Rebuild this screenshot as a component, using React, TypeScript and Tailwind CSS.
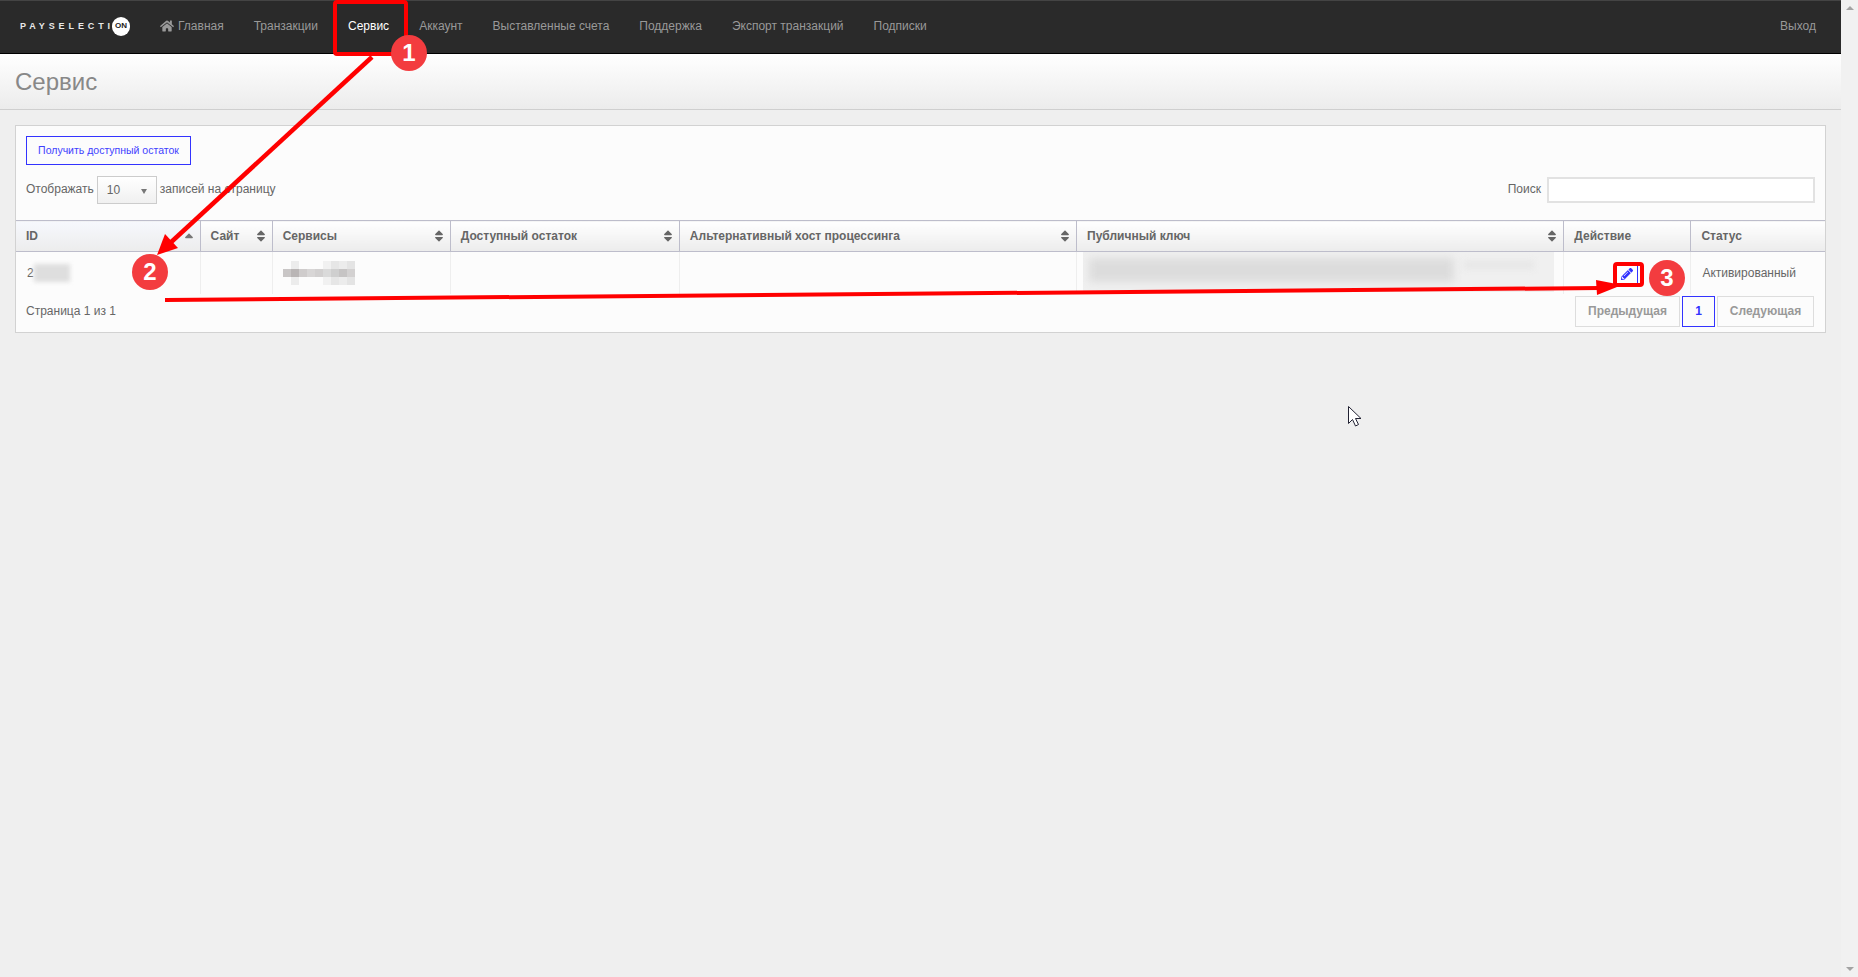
import React from 'react';
import { FaHome, FaPencilAlt, FaSort, FaSortUp } from 'react-icons/fa';

const navItems = ['Транзакции', 'Сервис', 'Аккаунт', 'Выставленные счета', 'Поддержка', 'Экспорт транзакций', 'Подписки'];

const columns = [
  { title: 'ID', width: 'w-[184px]', sort: 'up' },
  { title: 'Сайт', width: 'w-[72px]', sort: 'both' },
  { title: 'Сервисы', width: 'w-[178px]', sort: 'both' },
  { title: 'Доступный остаток', width: 'w-[229px]', sort: 'both' },
  { title: 'Альтернативный хост процессинга', width: 'w-[397px]', sort: 'both' },
  { title: 'Публичный ключ', width: 'w-[487px]', sort: 'both' },
  { title: 'Действие', width: 'w-[127px]', sort: '' },
  { title: 'Статус', width: 'w-[134px]', sort: '' },
];

const mosaicTop = ['w-[8px] bg-transparent', 'w-[8px] bg-[#ececec]', 'w-[24px] bg-transparent', 'w-[8px] bg-[#f1f1f1]', 'w-[8px] bg-[#e6e6e6]', 'w-[8px] bg-[#ececec]', 'w-[8px] bg-[#e4e4e4]'];
const mosaicMid = ['w-[8px] bg-[#c9c6c6]', 'w-[8px] bg-[#b9b5b5]', 'w-[8px] bg-[#cfcccc]', 'w-[8px] bg-[#d8d6d6]', 'w-[8px] bg-[#d2d0d0]', 'w-[8px] bg-[#dadada]', 'w-[8px] bg-[#cfcfcf]', 'w-[8px] bg-[#c6c4c4]', 'w-[8px] bg-[#d3d1d1]'];

const Logo = () => (
  <div className="flex items-center w-[125px]">
    <span className="w-[92px] whitespace-nowrap text-[9px] font-bold leading-none tracking-[3.9px] text-[#e8e8e8]">PAYSELECTI</span>
    <span className="flex h-[19px] w-[18px] items-center justify-center rounded-full bg-white text-[8px] font-bold leading-none text-[#222]">ON</span>
  </div>
);

const Navbar = () => (
  <nav className="flex h-[54px] shrink-0 items-center justify-between border-t border-t-[#444] border-b border-b-black bg-[#2a2a2a] pb-[2px] pl-5 pr-[25px] text-xs text-[#999]">
    <div className="flex items-center">
      <Logo />
      <a className="flex items-center gap-[4px] px-[15px]">
        <FaHome size={14} className="text-[#999]" />
        Главная
      </a>
      {navItems.map((item) => (
        <a key={item} className={item === 'Сервис' ? 'px-[15px] text-white' : 'px-[15px]'}>
          {item}
        </a>
      ))}
    </div>
    <a>Выход</a>
  </nav>
);

const ServiceTable = () => (
  <table className="w-full table-fixed border-collapse text-xs text-[#666]">
    <thead>
      <tr className="h-[31px]">
        {columns.map((col) => (
          <th
            key={col.title}
            className={`${col.width} border-y border-y-[#bdbdcb] border-r border-r-[#bdbdcb] last:border-r-0 bg-gradient-to-b ${col.title === 'ID' ? 'from-[#f6f8fd]' : 'from-white'} to-[#ececec] pl-[10px] pr-[4px] text-left font-bold`}
          >
            <div className="flex items-center justify-between">
              {col.title}
              {col.sort === 'both' && <FaSort size={14} className="text-[#666]" />}
              {col.sort === 'up' && <FaSortUp size={14} className="mt-[6px] text-[#777]" />}
            </div>
          </th>
        ))}
      </tr>
    </thead>
    <tbody>
      <tr className="h-[42px]">
        <td className="border-r border-r-[#eee] pl-[11px]">
          <div className="flex items-center">
            2
            <div className="h-[18px] w-[36px] bg-[#dedede] blur-[2px]" />
          </div>
        </td>
        <td className="border-r border-r-[#eee]" />
        <td className="border-r border-r-[#eee] pl-[10px]">
          <div className="flex w-[76px] flex-col">
            <div className="flex h-[8px]">
              {mosaicTop.map((c, i) => (
                <div key={i} className={c} />
              ))}
            </div>
            <div className="flex h-[8px]">
              {mosaicMid.map((c, i) => (
                <div key={i} className={c} />
              ))}
            </div>
            <div className="flex h-[8px]">
              {mosaicTop.map((c, i) => (
                <div key={i} className={c} />
              ))}
            </div>
          </div>
        </td>
        <td className="border-r border-r-[#eee]" />
        <td className="border-r border-r-[#eee]" />
        <td className="border-r border-r-[#eee] pb-[1px] pl-[6px] pr-[8px]">
          <div className="flex h-[40px] w-[471px] items-start gap-[10px] overflow-hidden bg-[#f0f0f0] p-[6px]">
            <div className="h-[24px] w-[365px] bg-[#dcdcdc] blur-[4px]" />
            <div className="mt-[3px] h-[8px] w-[70px] bg-[#e6e6e6] blur-[3px]" />
          </div>
        </td>
        <td className="border-r border-r-[#eee]">
          <div className="flex justify-end pr-[52px] pt-[2px]">
            <button className="flex h-[22px] w-[23px] items-center justify-center border border-[#3333ff] bg-white text-[#3333ff]">
              <FaPencilAlt size={12} />
            </button>
          </div>
        </td>
        <td className="pl-[11px] text-[#666]">Активированный</td>
      </tr>
    </tbody>
  </table>
);

const Panel = () => (
  <section className="mx-[15px] mt-[15px] h-[208px] border border-[#d2d2d2] bg-[#fcfcfc]">
    <div className="h-[94px] px-[10px] pt-[10px]">
      <button className="h-[29px] w-[165px] border border-[#3333ff] text-[10.5px] text-[#3f3fff]">Получить доступный остаток</button>
      <div className="mt-[11px] flex items-center justify-between text-xs text-[#666]">
        <div className="flex items-center gap-[3px]">
          <span className="mb-[2px]">Отображать</span>
          <div className="flex h-[28px] w-[60px] items-center justify-between border border-[#ccc] bg-gradient-to-b from-white to-[#f0f0f0] px-[9px]">
            10
            <span className="mt-[2px] border-x-[3px] border-t-[5px] border-x-transparent border-t-[#777]" />
          </div>
          <span className="mb-[2px]">записей на страницу</span>
        </div>
        <div className="flex items-center gap-[6px]">
          <span className="mb-[2px]">Поиск</span>
          <input className="h-[26px] w-[268px] border-2 border-[#e2e2e2] bg-white" />
        </div>
      </div>
    </div>
    <ServiceTable />
    <div className="flex items-start justify-between pl-[10px] pr-[11px] pt-[2px] text-xs text-[#666]">
      <span className="mt-[7px]">Страница 1 из 1</span>
      <div className="flex gap-[2px] font-bold">
        <a className="flex h-[31px] w-[105px] items-center justify-center border border-[#ddd] text-[#999]">Предыдущая</a>
        <a className="flex h-[31px] w-[33px] items-center justify-center border border-[#3333ff] text-[#3333ff]">1</a>
        <a className="flex h-[31px] w-[97px] items-center justify-center border border-[#ddd] text-[#999]">Следующая</a>
      </div>
    </div>
  </section>
);

// red callouts painted over the screenshot
const Annotations = () => (
  <svg className="pointer-events-none absolute left-0 top-0" width="1858" height="977" viewBox="0 0 1858 977">
    <rect x="335" y="2" width="71" height="52" rx="2" fill="none" stroke="#f00" strokeWidth="4" />
    <line x1="372" y1="57" x2="168" y2="245" stroke="#f00" strokeWidth="4.500" />
    <polygon points="157,255 165,234 178,248" fill="#f00" />
    <line x1="165" y1="300" x2="1600" y2="288" stroke="#f00" strokeWidth="4" />
    <polygon points="1622,285 1596,280 1597,295" fill="#f00" />
    <rect x="1615" y="264" width="27" height="21" rx="2" fill="none" stroke="#f00" strokeWidth="4" />
    <path d="M1348.5 406.500v17l4-4 3 6.500 3-1.500-3-6h5.500z" fill="#fff" stroke="#223" strokeWidth="1" />
  </svg>
);

const Badge = ({ n, className }: { n: number; className: string }) => (
  <div className={`absolute flex h-[36px] w-[36px] items-center justify-center rounded-full bg-[#f33c3f] text-[24px] font-bold text-white ${className}`}>
    {n}
  </div>
);

const Scrollbar = () => (
  <aside className="flex w-[17px] shrink-0 flex-col items-center justify-between bg-[#f1f1f1] py-[6px]">
    <span className="border-x-[4px] border-b-[4px] border-x-transparent border-b-[#a3a3a3]" />
    <span className="border-x-[4px] border-t-[4px] border-x-transparent border-t-[#a3a3a3]" />
  </aside>
);

export default function App() {
  return (
    <div className="relative flex h-[977px] w-full overflow-hidden bg-[#efefef] font-['Liberation_Sans',Arial,sans-serif]">
      <main className="flex min-w-0 flex-1 flex-col">
        <Navbar />
        <header className="flex h-[56px] shrink-0 items-center border-b border-b-[#cfcfcf] bg-gradient-to-b from-white to-[#ececec] pl-[15px]">
          <h1 className="text-[24px] font-normal text-[#888]">Сервис</h1>
        </header>
        <Panel />
      </main>
      <Scrollbar />
      <Annotations />
      <Badge n={1} className="left-[391px] top-[35px]" />
      <Badge n={2} className="left-[132px] top-[254px]" />
      <Badge n={3} className="left-[1649px] top-[260px]" />
    </div>
  );
}
